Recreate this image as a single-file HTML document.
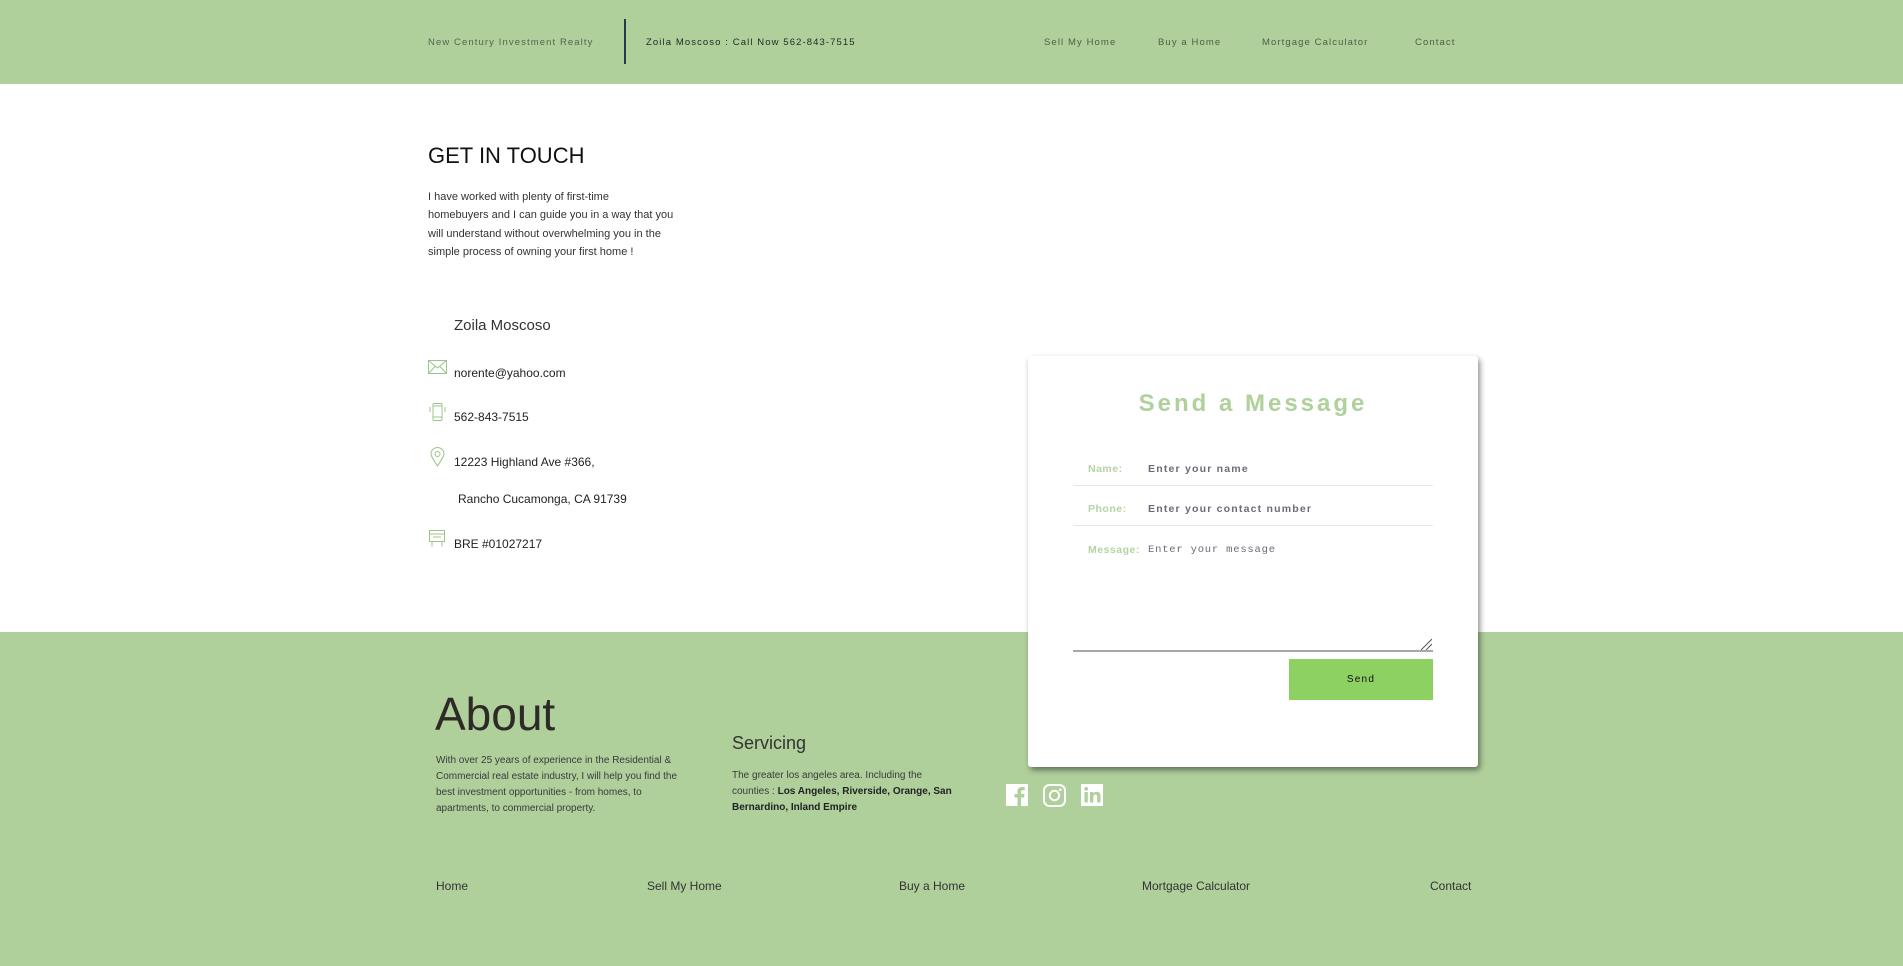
<!DOCTYPE html>
<html><head><meta charset="utf-8"><style>
*{margin:0;padding:0;box-sizing:border-box}
body{width:1903px;height:966px;position:relative;background:#fff;font-family:"Liberation Sans",Arial,sans-serif;overflow:hidden}
.a{position:absolute;white-space:nowrap}
.hdr{position:absolute;left:0;top:0;width:1903px;height:84px;background:#afcf9b}
.ftr{position:absolute;left:0;top:632px;width:1903px;height:334px;background:#afcf9b}
.nav{font-size:9.5px;letter-spacing:1.1px;color:#4f5f48;top:37px}
.ct{font-size:12px;color:#222}
.card{position:absolute;left:1028px;top:356px;width:450px;height:411px;background:#fff;border-radius:3px;box-shadow:2px 3px 6px rgba(0,0,0,.45)}
.lbl{font-size:10.5px;color:#b6d3a4;font-weight:bold;letter-spacing:.5px}
.ph{font-size:10.5px;color:#6b6b7a;font-weight:bold;letter-spacing:1.2px}
.fn{font-size:12px;color:#333;top:879px}
</style></head><body>
<div class="hdr"></div>
<div class="a nav" style="left:428px;color:#556650">New Century Investment Realty</div>
<div style="position:absolute;left:624px;top:19px;width:2px;height:45px;background:#1f3b4d"></div>
<div class="a nav" style="left:646px;color:#1b2b24">Zoila Moscoso : Call Now 562-843-7515</div>
<div class="a nav" style="left:1044px">Sell My Home</div>
<div class="a nav" style="left:1158px">Buy a Home</div>
<div class="a nav" style="left:1262px">Mortgage Calculator</div>
<div class="a nav" style="left:1415px">Contact</div>

<div class="a" style="left:428px;top:143px;font-size:22px;color:#111">GET IN TOUCH</div>
<div class="a" style="left:428px;top:188px;font-size:11px;line-height:18.3px;color:#333">I have worked with plenty of first-time<br>homebuyers and I can guide you in a way that you<br>will understand without overwhelming you in the<br>simple process of owning your first home !</div>

<div class="a" style="left:454px;top:317px;font-size:15px;color:#333">Zoila Moscoso</div>
<svg class="a" style="left:428px;top:360px" width="19" height="14" viewBox="0 0 19 14"><rect x=".5" y=".5" width="18" height="13" fill="none" stroke="#9cc58a"/><path d="M.5 .5L9.5 8L18.5 .5M.5 13.5L7 6.5M18.5 13.5L12 6.5" fill="none" stroke="#9cc58a"/></svg>
<div class="a ct" style="left:454px;top:366px">norente@yahoo.com</div>
<svg class="a" style="left:428px;top:403px" width="19" height="18" viewBox="0 0 19 18"><rect x="5" y=".5" width="9" height="17" rx="1" fill="none" stroke="#9cc58a"/><path d="M5 3h9M5 14h9M2 4v5M17 4v5" stroke="#9cc58a" fill="none"/></svg>
<div class="a ct" style="left:454px;top:410px">562-843-7515</div>
<svg class="a" style="left:430px;top:447px" width="15" height="20" viewBox="0 0 15 20"><path d="M7.5 19C3 12 1 9 1 7A6.5 6.5 0 0 1 14 7C14 9 12 12 7.5 19Z" fill="none" stroke="#9cc58a"/><circle cx="7.5" cy="7" r="2.5" fill="none" stroke="#9cc58a"/></svg>
<div class="a ct" style="left:454px;top:455px">12223 Highland Ave #366,</div>
<div class="a ct" style="left:458px;top:492px">Rancho Cucamonga, CA 91739</div>
<svg class="a" style="left:428px;top:529px" width="18" height="18" viewBox="0 0 18 18"><rect x="1.5" y="1.5" width="15" height="11" fill="none" stroke="#9cc58a"/><path d="M1.5 5h15M4 12.5v5M14 12.5v5M5 8h8" stroke="#9cc58a" fill="none"/></svg>
<div class="a ct" style="left:454px;top:537px">BRE #01027217</div>

<div class="ftr"></div>
<div class="a" style="left:435px;top:687px;font-size:46px;color:#2e2a28">About</div>
<div class="a" style="left:436px;top:753px;font-size:10px;line-height:16px;color:#3b3b3b">With over 25 years of experience in the Residential &amp;<br>Commercial real estate industry, I will help you find the<br>best investment opportunities - from homes, to<br>apartments, to commercial property.</div>
<div class="a" style="left:732px;top:733px;font-size:18px;color:#333">Servicing</div>
<div class="a" style="left:732px;top:768px;font-size:10px;line-height:16px;color:#3b3b3b">The greater los angeles area. Including the<br>counties : <b style="color:#222">Los Angeles, Riverside, Orange, San<br>Bernardino, Inland Empire</b></div>
<svg class="a" style="left:1006px;top:784px" width="22" height="22" viewBox="0 0 22 22"><rect width="22" height="22" fill="#fff"/><path d="M15 22V13.5h3l.5-3.5H15V8c0-1 .4-1.7 1.8-1.7h1.9V3.2c-.4 0-1.5-.2-2.8-.2-2.7 0-4.4 1.6-4.4 4.5V10H8.5v3.5h3V22z" fill="#afcf9b"/></svg>
<svg class="a" style="left:1043px;top:784px" width="23" height="23" viewBox="0 0 23 23"><rect x="1" y="1" width="21" height="21" rx="5.5" fill="none" stroke="#fff" stroke-width="2"/><circle cx="11.5" cy="11.5" r="4.7" fill="none" stroke="#fff" stroke-width="2"/><circle cx="17.3" cy="5.7" r="1.3" fill="#fff"/></svg>
<svg class="a" style="left:1081px;top:784px" width="22" height="22" viewBox="0 0 22 22"><rect width="22" height="22" fill="#fff"/><rect x="3.5" y="8" width="3.3" height="10.5" fill="#afcf9b"/><circle cx="5.15" cy="4.9" r="1.9" fill="#afcf9b"/><path d="M9 8h3.2v1.5c.6-1 1.8-1.8 3.5-1.8 3 0 3.8 2 3.8 4.6v6.2h-3.3v-5.5c0-1.4-.3-2.5-1.7-2.5s-2.2 1-2.2 2.6v5.4H9z" fill="#afcf9b"/></svg>
<div class="a fn" style="left:436px">Home</div>
<div class="a fn" style="left:647px">Sell My Home</div>
<div class="a fn" style="left:899px">Buy a Home</div>
<div class="a fn" style="left:1142px">Mortgage Calculator</div>
<div class="a fn" style="left:1430px">Contact</div>

<div class="card">
<div class="a" style="left:0;width:450px;text-align:center;top:34px;font-size:24px;font-weight:bold;letter-spacing:3px;color:#b0d09c">Send a Message</div>
<div class="a lbl" style="left:60px;top:107px">Name:</div>
<div class="a ph" style="left:120px;top:107px">Enter your name</div>
<div style="position:absolute;left:45px;top:129px;width:360px;height:1px;background:#e8e8e8"></div>
<div class="a lbl" style="left:60px;top:147px">Phone:</div>
<div class="a ph" style="left:120px;top:147px">Enter your contact number</div>
<div style="position:absolute;left:45px;top:169px;width:360px;height:1px;background:#e8e8e8"></div>
<div class="a lbl" style="left:60px;top:188px">Message:</div>
<div class="a" style="left:120px;top:188px;font-family:'Liberation Mono',monospace;font-size:10.5px;color:#6b6b7a;letter-spacing:.8px">Enter your message</div>
<svg class="a" style="left:392px;top:282px" width="12" height="12"><path d="M1 12L12 1M6 12L12 6" stroke="#555"/></svg>
<div style="position:absolute;left:45px;top:294px;width:360px;height:2px;background:#a8a8a8"></div>
<div style="position:absolute;left:261px;top:303px;width:144px;height:41px;background:#8dd163;text-align:center;line-height:41px;font-size:10px;letter-spacing:1.2px;color:#111">Send</div>
</div>
</body></html>
